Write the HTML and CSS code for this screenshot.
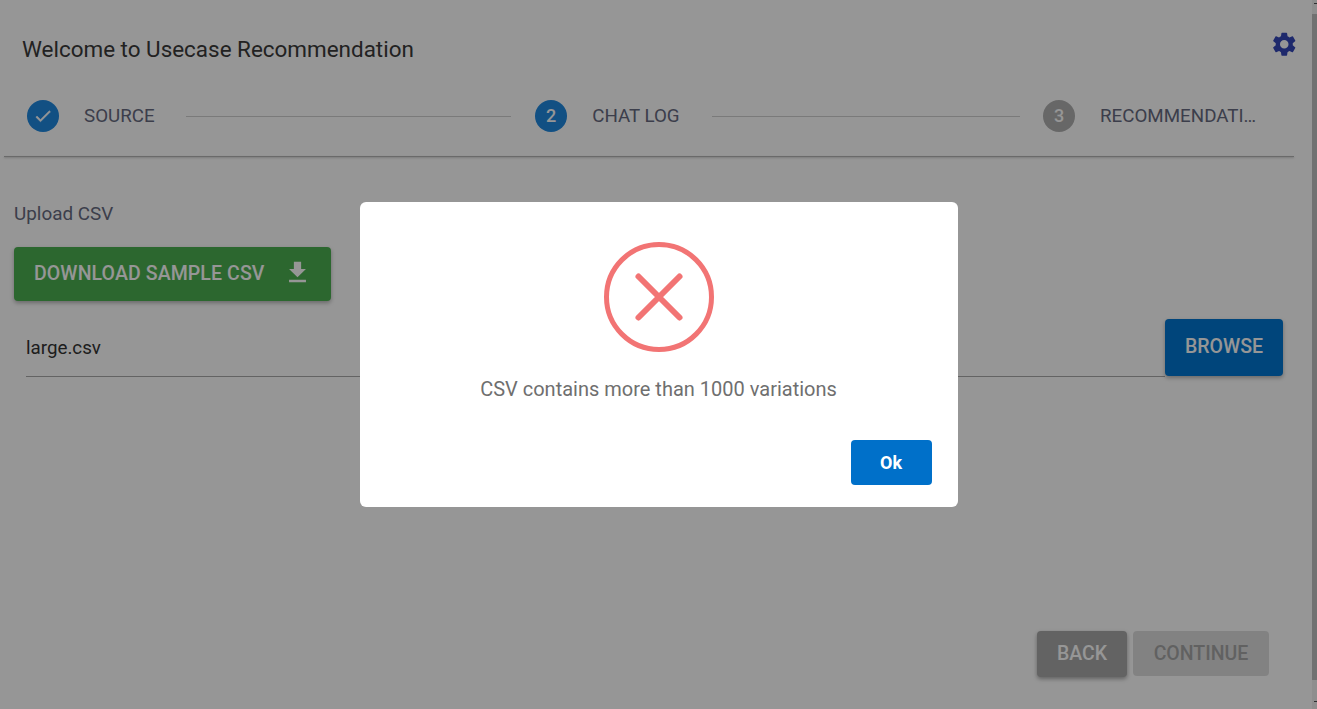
FILE: index.html
```html
<!DOCTYPE html>
<html lang="en">
<head>
<meta charset="utf-8">
<title>Usecase Recommendation</title>
<link rel="stylesheet" href="styles.css">
</head>
<body>
<div class="app">
  <main class="main">
    <header class="topbar">
      <h1 class="title">Welcome to Usecase Recommendation</h1>
      <svg class="gear" viewBox="0 0 24 24"><path d="M19.14 12.94c.04-.3.06-.61.06-.94 0-.32-.02-.64-.07-.94l2.03-1.58a.49.49 0 0 0 .12-.61l-1.92-3.32a.488.488 0 0 0-.59-.22l-2.39.96c-.5-.38-1.03-.7-1.62-.94l-.36-2.54a.484.484 0 0 0-.48-.41h-3.84c-.24 0-.43.17-.47.41l-.36 2.54c-.59.24-1.13.57-1.62.94l-2.39-.96c-.22-.08-.47 0-.59.22L2.74 8.87c-.12.21-.08.47.12.61l2.03 1.58c-.05.3-.09.63-.09.94s.02.64.07.94l-2.03 1.58a.49.49 0 0 0-.12.61l1.92 3.32c.12.22.37.29.59.22l2.39-.96c.5.38 1.03.7 1.62.94l.36 2.54c.05.24.24.41.48.41h3.84c.24 0 .44-.17.47-.41l.36-2.54c.59-.24 1.13-.56 1.62-.94l2.39.96c.22.08.47 0 .59-.22l1.92-3.32c.12-.22.07-.47-.12-.61l-2.01-1.58zM12 15.6c-1.98 0-3.6-1.62-3.6-3.6s1.62-3.6 3.6-3.6 3.6 1.62 3.6 3.6-1.62 3.6-3.6 3.6z"/></svg>
    </header>
    <nav class="stepper">
      <div class="step">
        <span class="badge badge-active">
          <svg class="check" viewBox="0 0 24 24"><path d="M9 16.17 4.83 12l-1.42 1.41L9 19 21 7l-1.41-1.41z"/></svg>
        </span>
        <span class="step-label">SOURCE</span>
      </div>
      <div class="connector conn-one"></div>
      <div class="step">
        <span class="badge badge-active">2</span>
        <span class="step-label">CHAT LOG</span>
      </div>
      <div class="connector conn-two"></div>
      <div class="step">
        <span class="badge badge-idle">3</span>
        <span class="step-label">RECOMMENDATI…</span>
      </div>
    </nav>
    <div class="divider"></div>
    <section class="content">
      <p class="upload-label">Upload CSV</p>
      <button class="btn btn-green">
        <span>DOWNLOAD SAMPLE CSV</span>
        <svg class="dl" viewBox="0 0 24 24"><path d="M19 9h-4V3H9v6H5l7 7 7-7zM5 18v2h14v-2H5z"/></svg>
      </button>
      <div class="file-row">
        <div class="file-input">large.csv</div>
        <button class="btn btn-blue">BROWSE</button>
      </div>
    </section>
    <footer class="actions">
      <button class="btn btn-back">BACK</button>
      <button class="btn btn-continue">CONTINUE</button>
    </footer>
  </main>
  <aside class="scrollbar">
    <div class="arrow"></div>
    <div class="thumb"></div>
    <div class="arrow arrow-down"></div>
  </aside>
</div>
<div class="overlay">
  <div class="dialog">
    <svg class="error" viewBox="0 0 110 110">
      <circle cx="55" cy="55" r="52.5" fill="none" stroke-width="5"/>
      <path d="M34.500 34.500 L75.500 75.500 M75.500 34.500 L34.500 75.500" fill="none" stroke-width="6" stroke-linecap="round"/>
    </svg>
    <p class="message">CSV contains more than 1000 variations</p>
    <div class="dialog-actions"><button class="btn-ok">Ok</button></div>
  </div>
</div>
</body>
</html>
```
FILE: styles.css
```css
* { box-sizing: border-box; }
html, body { margin: 0; height: 100%; overflow: hidden; }
body { background: #fff; font-family: Roboto, "Liberation Sans", sans-serif; color: #222; }
.app { display: flex; height: 709px; }
.main { width: 1312px; padding: 0 0 0 4px; display: flex; flex-direction: column; }
.topbar { display: flex; justify-content: space-between; align-items: flex-start; height: 83px; padding: 31px 15px 0 18px; width: 1307px; }
.title { margin: 3px 0 0; font-size: 22.450px; font-weight: 400; line-height: 30px; color: #3a3a3a; }
.gear { width: 28.500px; height: 28.500px; fill: #3346b8; margin-right: -2px; margin-top: -1px; }
.stepper { display: flex; align-items: center; height: 74px; padding: 0 0 9px 23px; width: 1290px; }
.step { display: flex; align-items: center; gap: 25px; flex: none; }
.badge { width: 32px; height: 32px; border-radius: 50%; display: flex; align-items: center; justify-content: center; color: #fff; font-size: 18px; font-weight: 500; }
.badge-active { background: #1f88df; }
.badge-idle { background: #b0b0b0; color: #fff; }
.check { width: 20px; height: 20px; fill: #fff; stroke: #fff; stroke-width: .6px; }
.step-label { font-size: 18.750px; color: #666a80; white-space: nowrap; }
.connector { height: 1px; background: #d0d0d0; flex: none; margin-top: 1px; }
.conn-one { width: 325px; margin-left: 31px; margin-right: 24.600px; }
.conn-two { width: 308px; margin-left: 32.400px; margin-right: 23px; }
.divider { width: 1290px; height: 1px; background: #b4b4b4; box-shadow: 0 1px 2px rgba(0,0,0,.25); margin-top: -1px; }
.content { padding: 0 24px 0 10px; width: 1303px; }
.upload-label { margin: 45px 0 0; font-size: 18.850px; line-height: 24px; color: #666a80; }
.btn { border: 0; border-radius: 4px; font-family: inherit; font-size: 19.500px; font-weight: 500; padding: 0 0 1px; display: inline-flex; align-items: center; justify-content: center; }
.btn-green { margin-top: 21px; width: 317px; height: 54px; background: #4caf50; color: #fff; gap: 19px; box-shadow: 0 2px 4px rgba(0,0,0,.3); justify-content: flex-start; padding-left: 20px; letter-spacing: .1px; }
.dl { width: 29px; height: 29px; fill: #fff; margin-top: -2px; }
.file-row { display: flex; align-items: flex-start; margin-top: 18px; padding-left: 12px; }
.file-input { flex: 1; height: 58px; line-height: 58px; border-bottom: 1px solid #a8a8a8; font-size: 18.750px; color: #333; }
.btn-blue { width: 118px; height: 57px; background: #0075d1; color: #fff; box-shadow: 0 2px 4px rgba(0,0,0,.3); padding-bottom: 2px; }
.actions { display: flex; justify-content: flex-end; gap: 6px; margin-top: auto; padding: 0 43px 32px 0; }
.btn-back { width: 90px; height: 46px; background: #a8a8a8; color: #fff; box-shadow: 0 2px 4px rgba(0,0,0,.35); }
.btn-continue { width: 136px; height: 45px; background: #dedede; color: #a6a6a6; }
.scrollbar { width: 5px; height: 709px; background: #f1f1f1; display: flex; flex-direction: column; align-items: flex-end; }
.arrow { width: 3px; height: 1px; background: #505050; margin-top: 3px; flex: none; }
.thumb { width: 5px; height: 666px; margin-top: 10px; background: #c1c1c1; flex: none; }
.arrow-down { margin-top: 21px; }
.overlay { position: fixed; inset: 0; background: rgba(0,0,0,.41); display: flex; align-items: flex-start; justify-content: center; padding-top: 202px; }
.dialog { width: 598px; height: 305px; background: #fff; border-radius: 6px; display: flex; flex-direction: column; align-items: center; padding: 40px 26px 22px; }
.error { width: 110px; height: 110px; stroke: #f27474; flex: none; }
.message { margin: 25px 0 0; font-size: 20px; line-height: 24px; color: #6f6f6f; }
.dialog-actions { margin-top: auto; align-self: flex-end; }
.btn-ok { width: 81px; height: 45px; background: #0070c9; color: #fff; border: 0; border-radius: 4px; font-family: inherit; font-size: 18px; font-weight: 700; }
```
